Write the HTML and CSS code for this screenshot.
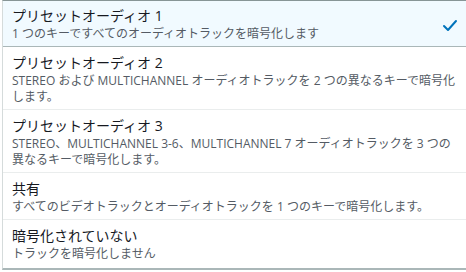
FILE: index.html
```html
<!DOCTYPE html>
<html lang="ja">
  <head>
    <meta charset="utf-8" />
    <title>暗号化プリセット</title>
    <link rel="stylesheet" href="styles.css">
  </head>
  <body>
    <!-- Preset dropdown, opened -->
    <ul class="option-list">
      <li class="option option-selected">
        <div class="option-body">
          <div class="option-title">プリセットオーディオ 1</div>
          <div class="option-desc">1 つのキーですべてのオーディオトラックを暗号化します</div>
        </div>
        <svg class="option-check" width="16" height="16" viewBox="0 0 16 16" fill="none">
          <polyline points="2,8 6,12 14,3" stroke="#0073bb" stroke-width="2" stroke-linecap="round" stroke-linejoin="round"/>
        </svg>
      </li>
      <li class="option">
        <div class="option-body">
          <div class="option-title">プリセットオーディオ 2</div>
          <div class="option-desc">STEREO および MULTICHANNEL オーディオトラックを 2 つの異なるキーで暗号化します。</div>
        </div>
      </li>
      <li class="option">
        <div class="option-body">
          <div class="option-title">プリセットオーディオ 3</div>
          <div class="option-desc">STEREO、MULTICHANNEL 3-6、MULTICHANNEL 7 オーディオトラックを 3 つの異なるキーで暗号化します。</div>
        </div>
      </li>
      <li class="option">
        <div class="option-body">
          <div class="option-title">共有</div>
          <div class="option-desc">すべてのビデオトラックとオーディオトラックを 1 つのキーで暗号化します。</div>
        </div>
      </li>
      <li class="option">
        <div class="option-body">
          <div class="option-title">暗号化されていない</div>
          <div class="option-desc">トラックを暗号化しません</div>
        </div>
      </li>
    </ul>
  </body>
</html>
```

FILE: styles.css
```css
* {
  margin: 0;
  padding: 0;
  box-sizing: border-box;
}

body {
  font-family: 'Open Sans', 'Noto Sans CJK JP', sans-serif;
  background: #ffffff;
  color: #16191f;
  padding-left: 2px;
}

/* Dropdown list */
.option-list {
  list-style: none;
  border-left: 1px solid #d5dbdb;
  border-top: 1px solid #879596;
  border-bottom: 2px solid #aab7b8;
  margin-bottom: 2px;
}

.option {
  display: flex;
  align-items: center;
  padding: 6px 6px 4px 9px;
  border-bottom: 1px solid #eaeded;
}

.option:last-child {
  border-bottom: none;
  padding-bottom: 6px;
}

.option-selected {
  background: #f1faff;
  border-bottom-color: #aab7b8;
  padding-top: 5px;
  padding-right: 8px;
}

.option-body {
  flex: 1;
  min-width: 0;
}

.option-title {
  font-size: 14px;
  line-height: 20px;
}

.option-desc {
  font-size: 12px;
  line-height: 16px;
  color: #545b64;
}

.option-check {
  flex: none;
  margin-top: 3px;
}
```
